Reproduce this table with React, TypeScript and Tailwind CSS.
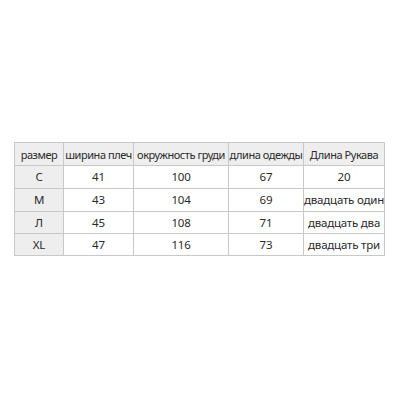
import React from "react";

const headers = ["размер", "ширина плеч", "окружность груди", "длина одежды", "Длина Рукава"];
const rows = [
  ["C", "41", "100", "67", "20"],
  ["M", "43", "104", "69", "двадцать один"],
  ["Л", "45", "108", "71", "двадцать два"],
  ["XL", "47", "116", "73", "двадцать три"],
];
const widths = ["w-[49px]", "w-[70px]", "w-[95px]", "w-[75px]", "w-[81px]"];

export default function App() {
  return (
    <div className="w-[400px] h-[400px] bg-white pt-[142px] pl-[14px]" style={{ fontFamily: '"Noto Sans", "Open Sans", sans-serif' }}>
      <table className="table-fixed border-collapse w-[371px] text-[11.5px] text-[#2a2a2a] leading-none">
        <colgroup>
          {widths.map((w, i) => (
            <col key={i} className={w} />
          ))}
        </colgroup>
        <thead>
          <tr className="h-[23px] bg-[#eeeeee]">
            {headers.map((h, i) => (
              <th key={i} className="border border-[#c8c8c8] font-normal text-center whitespace-nowrap p-0 text-[11px] tracking-[-0.45px]">
                {h}
              </th>
            ))}
          </tr>
        </thead>
        <tbody>
          {rows.map((r, ri) => (
            <tr key={ri} className={ri < 2 ? "h-[23px]" : "h-[22px]"}>
              {r.map((c, ci) => (
                <td
                  key={ci}
                  className={`border border-[#c8c8c8] text-center whitespace-nowrap p-0 tracking-[-0.2px] ${ci === 0 ? "bg-[#eeeeee]" : "bg-white"}`}
                >
                  {c}
                </td>
              ))}
            </tr>
          ))}
        </tbody>
      </table>
    </div>
  );
}
